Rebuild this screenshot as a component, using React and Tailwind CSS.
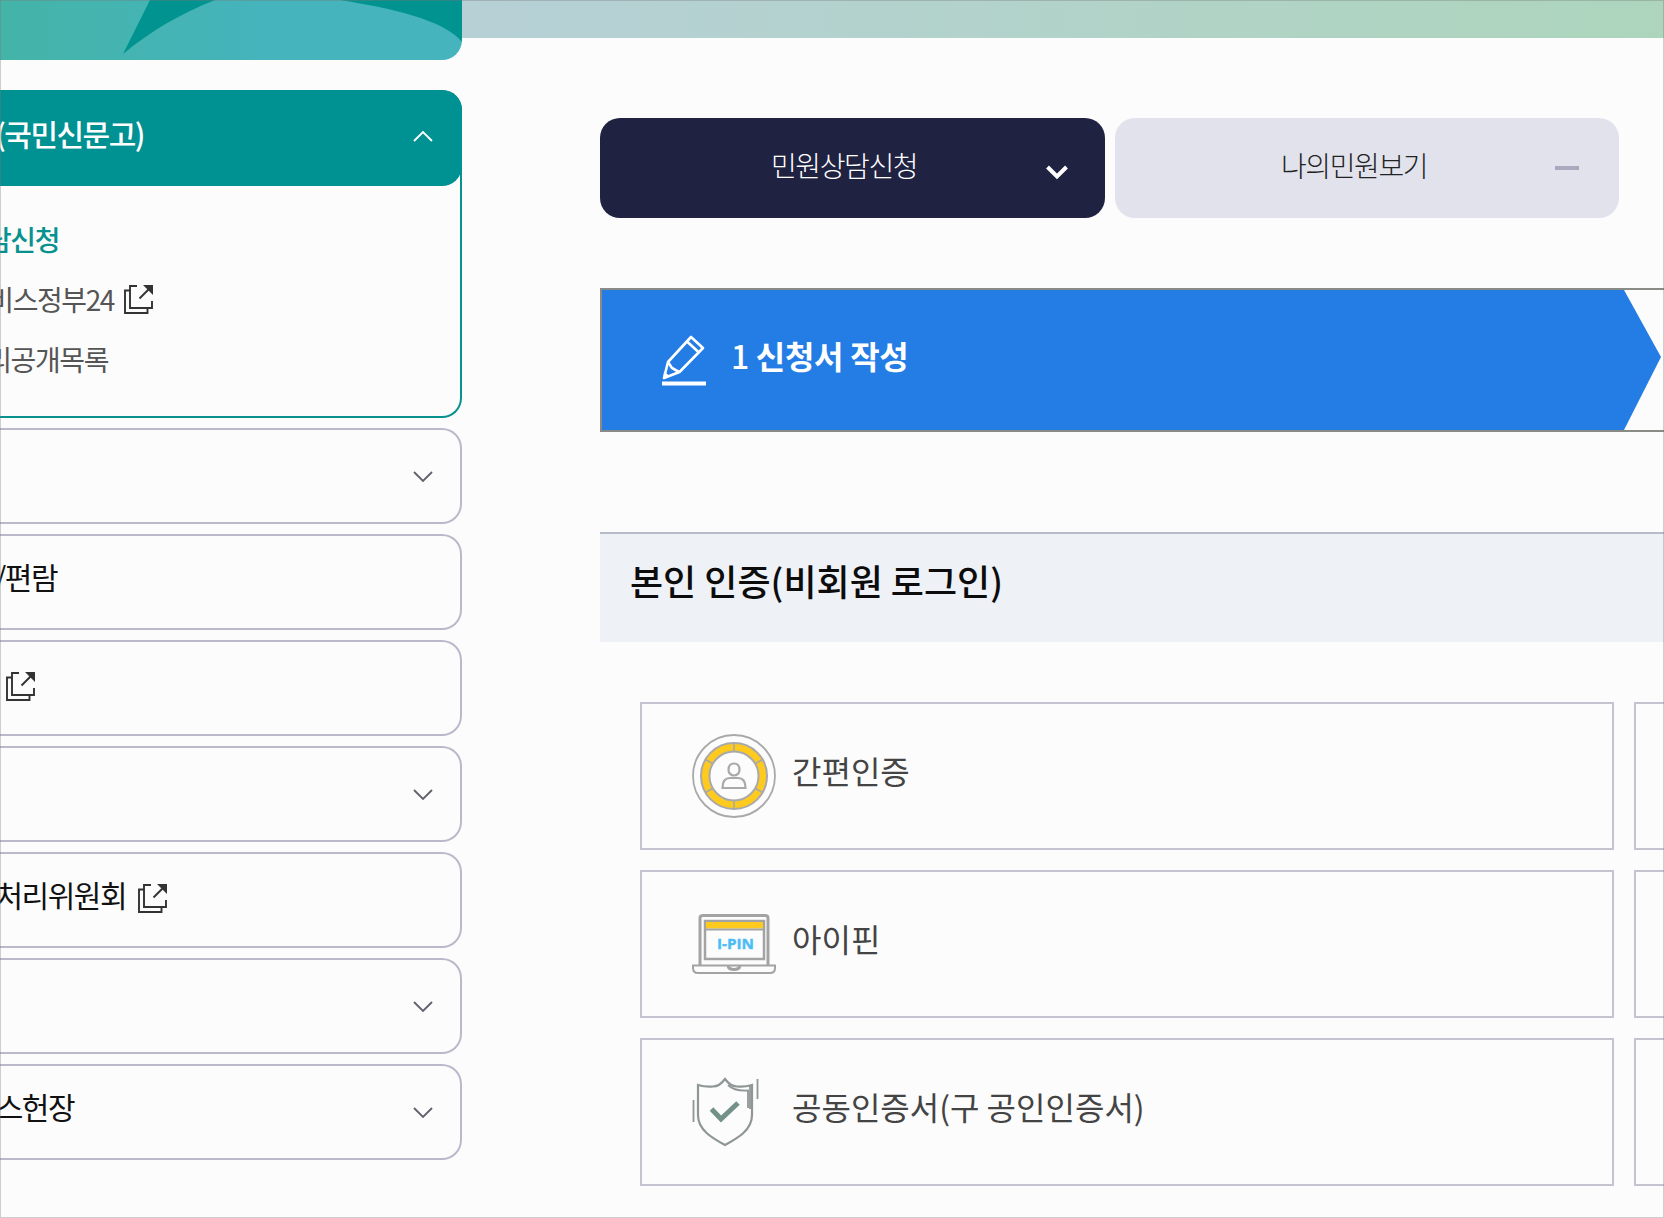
import React from "react";

function Chevron({ up = false, className = "" }) {
  return (
    <svg width="20" height="12" viewBox="0 0 20 12" fill="none" className={className}>
      <path d={up ? "M1 11 L10 2 L19 11" : "M1 1 L10 10 L19 1"} stroke="currentColor" strokeWidth="1.9" />
    </svg>
  );
}

function External({ className = "" }) {
  return (
    <svg width="29" height="29" viewBox="0 0 29 29" fill="none" stroke="currentColor" strokeWidth="1.9" className={className}>
      <path d="M13 1H6V23H28V16" />
      <path d="M6 5.5H1V28H23.5V23" />
      <path d="M15.5 13.5L26 3" />
      <path d="M19 0H29V10L25.5 6.5L22.5 3.5Z" fill="currentColor" stroke="none" />
    </svg>
  );
}

const menu = [
  { label: "", width: "w-0", chevron: true },
  { label: "/편람", width: "w-[57px]" },
  { label: "", width: "w-0", external: "ml-[6px]" },
  { label: "", width: "w-0", chevron: true },
  { label: "처리위원회", width: "w-[126px]", external: "ml-[12px]" },
  { label: "", width: "w-0", chevron: true },
  { label: "스헌장", width: "w-[74px]", chevron: true },
];

function ClippedText({ width, children }) {
  return (
    <span className={"flex shrink-0 justify-end whitespace-nowrap " + width}>
      <span>{children}</span>
    </span>
  );
}

function Sidebar() {
  return (
    <aside className="w-[462px] shrink-0">
      <div className="h-[60px] overflow-hidden rounded-br-[20px]">
        <svg width="462" height="60" viewBox="0 0 462 60" className="block">
          <defs>
            <linearGradient id="wave" x1="0" x2="1" y1="0" y2="0">
              <stop offset="0" stopColor="#44b4a8" />
              <stop offset="0.6" stopColor="#45b4bd" />
            </linearGradient>
          </defs>
          <rect width="462" height="60" fill="url(#wave)" />
          <path d="M150 0L123 54C152 30 180 14 215 0Z" fill="#01938f" />
          <path d="M340 0C390 8 445 20 462 42V0Z" fill="#01938f" />
        </svg>
      </div>

      <div className="mt-[30px] h-[328px] rounded-r-[20px] border-y-2 border-r-2 border-[#07928f]">
        <div className="-mt-[2px] -mr-[2px] flex h-24 items-center justify-between rounded-r-[20px] bg-[#009193] pr-[29px] text-[30px] font-medium tracking-[-0.05em] text-white">
          <ClippedText width="w-[144px]">
            <span className="relative -top-[5px]">(국민신문고)</span>
          </ClippedText>
          <Chevron up className="-mt-[4px]" />
        </div>
        <div className="pt-[23px] text-[28px] leading-[60px] tracking-[-0.05em] text-[#555]">
          <div className="flex h-[60px] font-medium text-[#07918f]">
            <ClippedText width="w-[59px]">담신청</ClippedText>
          </div>
          <div className="flex h-[60px] items-center">
            <ClippedText width="w-[114px]">비스정부24</ClippedText>
            <External className="ml-[10px] text-[#333]" />
          </div>
          <div className="flex h-[60px]">
            <ClippedText width="w-[108px]">리공개목록</ClippedText>
          </div>
        </div>
      </div>

      <nav className="mt-[10px] flex flex-col gap-[10px]">
        {menu.map((item, i) => (
          <div key={i} className="flex h-24 items-center rounded-r-[20px] border-y-2 border-r-2 border-[#b9b9cb] pr-[27px] text-[30px] tracking-[-0.05em] text-[#111]">
            <ClippedText width={item.width}>
              <span className="relative -top-[6px]">{item.label}</span>
            </ClippedText>
            {item.external && <External className={item.external + " -mt-[4px] text-[#333]"} />}
            {item.chevron && <Chevron className="mt-[2px] ml-auto text-[#62626e]" />}
          </div>
        ))}
      </nav>
    </aside>
  );
}

function PencilIcon() {
  return (
    <svg width="44" height="51" viewBox="0 0 44 51" fill="none" stroke="white" strokeWidth="2.6">
      <path d="M29 2L41 13L17.500 37L2 43L6 27Z" strokeLinejoin="round" />
      <path d="M25 6.500L37 17.500M6 27L10 33L17 37" />
      <path d="M2 36.500L7.500 41L1.500 43.500Z" fill="white" stroke="none" />
      <path d="M0 48.500H44" strokeWidth="4" />
    </svg>
  );
}

function UserBadgeIcon() {
  return (
    <svg width="84" height="84" viewBox="0 0 84 84" fill="none" stroke="#a9a9a9">
      <circle cx="42" cy="42" r="41" strokeWidth="1.8" />
      <circle cx="42" cy="42" r="29" stroke="#fdca1d" strokeWidth="8" />
      <circle cx="42" cy="42" r="33" strokeWidth="2" />
      <circle cx="42" cy="42" r="24.500" strokeWidth="2" />
      <path d="M42 9V17M42 67V75M13.500 25.500L20.500 29.500M63.500 29.500L70.500 25.500M13.500 58.500L20.500 54.500M63.500 54.500L70.500 58.500" strokeWidth="1.600" />
      <path d="M36.500 36C36.500 32 38 29.500 42 29.500S47.500 32 47.500 36C47.500 39 45 41.500 42 41.500S36.500 39 36.500 36Z" strokeWidth="2.200" />
      <path d="M38 44H46C51 44 53.500 47 53.500 54H30.500C30.500 47 33 44 38 44Z" strokeWidth="2.200" />
    </svg>
  );
}

function LaptopIcon() {
  return (
    <svg width="84" height="60" viewBox="0 0 84 60" fill="none" stroke="#a3a3a3" strokeWidth="2">
      <path d="M8 51V4Q8 1.500 11 1.500H73Q76 1.500 76 4V51" strokeWidth="3" />
      <rect x="13" y="7" width="59" height="38" strokeWidth="2.500" />
      <rect x="14" y="8" width="57" height="6.500" fill="#fdca1d" stroke="none" />
      <path d="M13 15.500H72" />
      <path d="M1 51.500H83V54Q83 59 78 59H6Q1 59 1 54Z" />
      <path d="M36 52Q37 55.500 42 55.500T48 52" strokeWidth="3" />
      <text x="43.500" y="35" textAnchor="middle" fill="#4bbdf5" stroke="#4bbdf5" strokeWidth="0.400" fontSize="15" fontWeight="700" fontFamily="Open Sans, sans-serif" textLength="37" lengthAdjust="spacingAndGlyphs">I-PIN</text>
    </svg>
  );
}

function ShieldIcon() {
  return (
    <svg width="68" height="70" viewBox="0 0 68 70" fill="none" stroke="#8f9696" strokeWidth="2.200">
      <path d="M33 2C29 7.500 25 9.500 21 9.500C16 10 11 9.500 6 8V38C6 53 20 61 33 68C46 61 60 53 60 38V8C55 9.500 50 10 45 9.500C41 9.500 37 7.500 33 2Z" />
      <path d="M36 8C41 13 48 14 56 13.500V31M58 9V32" strokeWidth="1.800" />
      <path d="M19.500 32L29 42L46 26" stroke="#739089" strokeWidth="5" />
      <path d="M1.500 23V45M65.500 2V22" strokeWidth="1.800" />
    </svg>
  );
}

const methods = [
  { label: "간편인증", Icon: UserBadgeIcon },
  { label: "아이핀", Icon: LaptopIcon },
  { label: "공동인증서(구 공인인증서)", Icon: ShieldIcon },
];

function MainContent() {
  return (
    <main className="flex min-w-0 flex-1 flex-col">
      <div className="h-[38px] bg-linear-to-r from-[#b6d0d6] to-[#add5bc]" />
      <div className="ml-[138px]">
        <div className="mt-20 flex gap-[10px] text-[28px] font-light tracking-[-0.05em]">
          <div className="flex h-[100px] w-[505px] items-center rounded-[20px] bg-[#202242] pr-[37px] pl-[171px] text-white">
            <span className="-mt-[6px]">민원상담신청</span>
            <svg width="22" height="15" viewBox="0 0 22 15" fill="none" className="mt-[8px] ml-auto">
              <path d="M1.500 2L11 11.500L20.500 2" stroke="white" strokeWidth="4" />
            </svg>
          </div>
          <div className="flex h-[100px] w-[504px] items-center rounded-[20px] bg-[#e1e2ec] pr-[40px] pl-[166px] text-[#222]">
            <span className="-mt-[6px]">나의민원보기</span>
            <span className="ml-auto h-1 w-6 bg-[#a9aabd]" />
          </div>
        </div>

        <div className="mt-[70px] flex h-36 border-y-2 border-l-2 border-[#898b86]">
          <div className="flex w-[1021px] shrink-0 items-center bg-[#247de5] pl-[60px] text-white">
            <PencilIcon />
            <span className="-mt-[10px] ml-[25px] text-[32px] font-bold tracking-[-0.01em] whitespace-pre">
              <span className="font-medium">1</span> 신청서 작성
            </span>
          </div>
          <svg width="38" height="140" viewBox="0 0 38 140" className="shrink-0">
            <path d="M0 0H1L38 67L1 140H0Z" fill="#247de5" />
          </svg>
        </div>

        <div className="mt-[100px] flex h-[110px] items-center border-t-2 border-[#b7bbc9] bg-[#eef1f6] pl-[30px] text-[36px] font-medium text-[#0c0c0c]">
          <h2 className="-mt-[16px]">본인 인증(비회원 로그인)</h2>
        </div>

        <div className="mt-[60px] ml-10 flex flex-col gap-5">
          {methods.map(({ label, Icon }) => (
            <div key={label} className="flex gap-5">
              <div className="flex h-[148px] w-[974px] shrink-0 items-center border-2 border-[#c3c3d2] pl-[50px] text-[32px] text-[#444]">
                <div className="w-[100px]">
                  <Icon />
                </div>
                <span className="-mt-[12px]">{label}</span>
              </div>
              <div className="h-[148px] flex-1 border-y-2 border-l-2 border-[#c3c3d2]" />
            </div>
          ))}
        </div>
      </div>
    </main>
  );
}

export default function App() {
  return (
    <div className="relative flex h-[1218px] w-[1664px] overflow-hidden bg-[#fcfcfc] font-['Noto_Sans_CJK_KR',sans-serif]">
      <Sidebar />
      <MainContent />
      <div className="pointer-events-none absolute inset-0 border border-[#777]/35" />
    </div>
  );
}
